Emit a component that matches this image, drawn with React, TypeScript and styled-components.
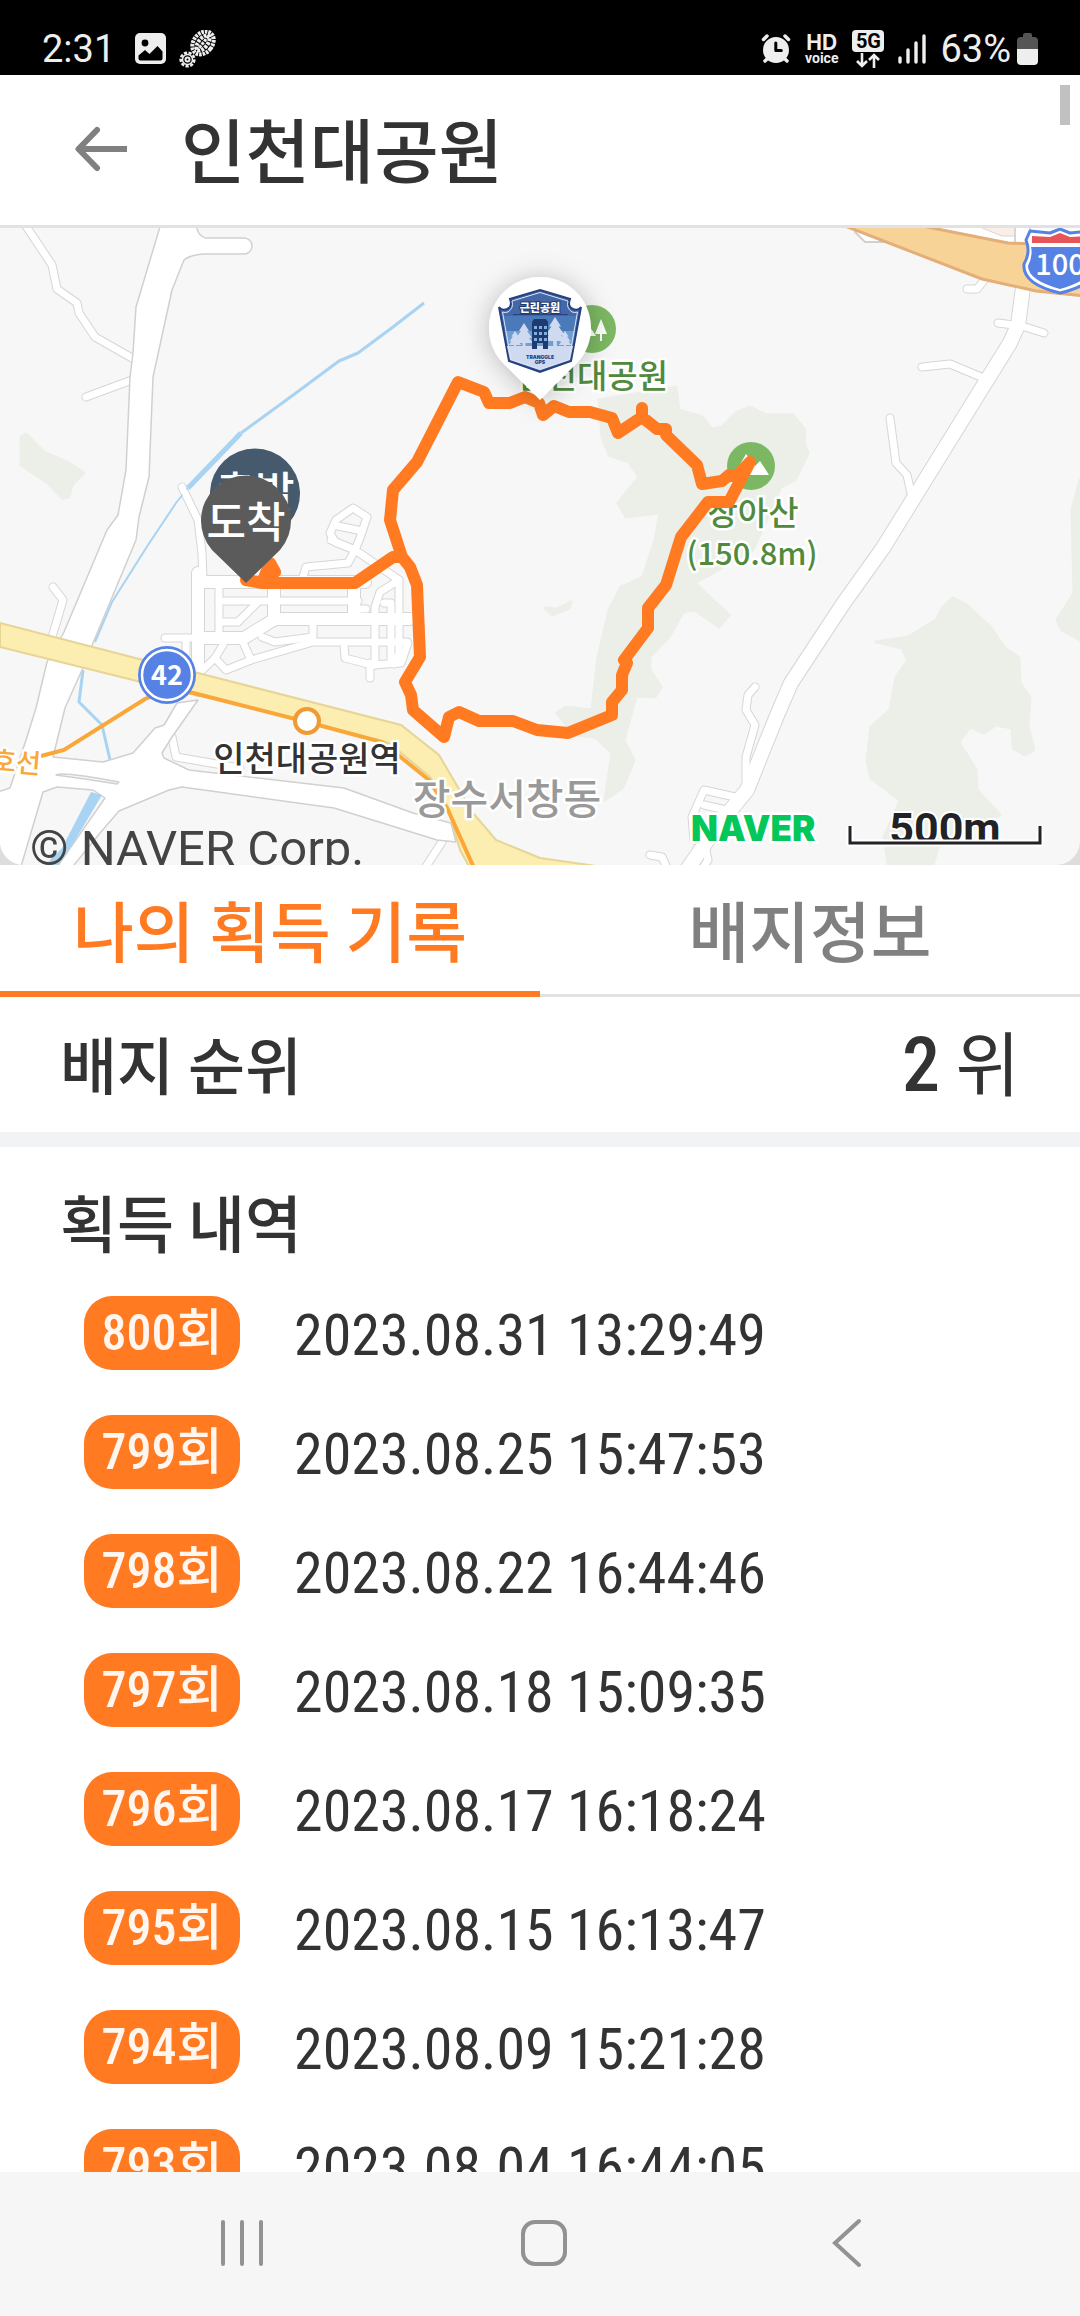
import React, { useState } from "react";
import styled, { createGlobalStyle } from "styled-components";

const ORANGE = "#ff7a21";
const INK = "#333333";

const GlobalStyle = createGlobalStyle`
  *, *::before, *::after { box-sizing: border-box; }
  body {
    margin: 0;
    background: #ffffff;
    color: ${INK};
    font-family: "Noto Sans CJK KR", sans-serif;
  }
  button { font: inherit; color: inherit; background: none; border: 0; padding: 0; margin: 0; }
  h1, h2, p, ul { margin: 0; padding: 0; }
`;

const Screen = styled.div`
  display: flex;
  flex-direction: column;
  height: 100vh;
  overflow: hidden;
`;

/* ---------- status bar ---------- */

const StatusBar = styled.div`
  display: flex;
  flex: none;
  align-items: center;
  justify-content: space-between;
  height: 75px;
  padding: 22px 42px 0 42px;
  background: #000000;
  color: #eeeeee;
  font-family: Roboto, sans-serif;
  font-size: 38px;
  line-height: 48px;
`;

const StatusGroup = styled.div<{ $gap: number }>`
  display: flex;
  align-items: center;
  gap: ${(p) => p.$gap}px;
`;

const StatusPower = styled.div`
  display: flex;
  align-items: center;
  gap: 6px;
`;

const HdVoice = styled.div`
  display: flex;
  flex-direction: column;
  align-items: center;
  font-family: Inter, sans-serif;
  font-weight: 700;
`;

const HdTop = styled.span`
  font-size: 21px;
  line-height: 19px;
`;

const HdBottom = styled.span`
  font-family: Roboto, sans-serif;
  font-size: 14px;
  line-height: 12px;
`;

const NetType = styled.div`
  display: flex;
  flex-direction: column;
  align-items: center;
  gap: 1px;
`;

const NetLabel = styled.span`
  width: 32px;
  border-radius: 4px;
  background: #eeeeee;
  color: #000000;
  font-size: 20px;
  font-weight: 700;
  line-height: 22px;
  text-align: center;
`;

/* ---------- header ---------- */

const Header = styled.header`
  position: relative;
  display: flex;
  flex: none;
  align-items: center;
  gap: 52px;
  height: 153px;
  padding: 0 72px 4px;
  border-bottom: 3px solid #e2e2e2;
`;

const BackButton = styled.button`
  display: flex;
  color: #808080;
`;

const Title = styled.h1`
  font-size: 70px;
  font-weight: 500;
  line-height: 100px;
`;

const ScrollThumb = styled.div`
  position: absolute;
  top: 10px;
  right: 10px;
  width: 10px;
  height: 40px;
  background: #c1c1c1;
`;

/* ---------- map ---------- */

const MapFrame = styled.section`
  flex: none;
  height: 637px;
  background: #dddddd;
`;

const MapDrawing = styled.svg`
  display: block;
  width: 100%;
  height: 100%;
  border-radius: 0 0 24px 24px;
  background: #f7f7f7;
`;

const MapLabel = styled.text<{ $size: number; $weight?: number }>`
  font-family: "Noto Sans CJK KR", sans-serif;
  font-size: ${(p) => p.$size}px;
  font-weight: ${(p) => p.$weight ?? 500};
`;

const HaloLabel = styled(MapLabel)`
  paint-order: stroke;
  stroke: #ffffff;
  stroke-width: 5px;
  stroke-linejoin: round;
`;

const LatinLabel = styled.text<{ $size: number; $weight: number; $family: string }>`
  font-family: ${(p) => p.$family}, sans-serif;
  font-size: ${(p) => p.$size}px;
  font-weight: ${(p) => p.$weight};
`;

/* ---------- tabs ---------- */

const Tabs = styled.div`
  display: flex;
  flex: none;
  height: 132px;
`;

const Tab = styled.button<{ $active: boolean }>`
  flex: 1;
  padding-bottom: ${(p) => (p.$active ? 0 : 3)}px;
  border-bottom: ${(p) => (p.$active ? `6px solid ${ORANGE}` : "3px solid #e2e2e2")};
  color: ${(p) => (p.$active ? ORANGE : "#808080")};
  font-size: 66px;
  font-weight: 500;
  line-height: 96px;
`;

/* ---------- rank + history ---------- */

const RankRow = styled.section`
  display: flex;
  flex: none;
  align-items: center;
  justify-content: space-between;
  height: 150px;
  padding: 0 60px 4px;
  border-bottom: 15px solid #f1f3f5;
`;

const SectionTitle = styled.h2`
  font-size: 62px;
  font-weight: 500;
  line-height: 88px;
`;

const Rank = styled.p`
  font-size: 70px;
  font-weight: 400;
  line-height: 88px;
`;

const RankNumber = styled.strong`
  font-family: "Roboto Condensed", "Noto Sans CJK KR", sans-serif;
  font-size: 76px;
  font-weight: 500;
`;

const History = styled.section`
  flex: 1;
  min-height: 0;
  overflow: hidden;
  padding: 30px 60px 0;
`;

const HistoryList = styled.ul`
  display: flex;
  flex-direction: column;
  gap: 45px;
  margin-top: 31px;
  padding-left: 24px;
  list-style: none;
`;

const HistoryItem = styled.li`
  display: flex;
  align-items: center;
  gap: 54px;
  height: 74px;
`;

const CountBadge = styled.span`
  width: 156px;
  height: 74px;
  border-radius: 28px;
  background: ${ORANGE};
  color: #fff6f0;
  font-family: "Roboto Condensed", "Noto Sans CJK KR", sans-serif;
  font-size: 50px;
  font-weight: 500;
  line-height: 74px;
  text-align: center;
`;

const Stamp = styled.time`
  font-family: "Roboto Condensed", "Noto Sans CJK KR", sans-serif;
  font-size: 58px;
  line-height: 74px;
  padding-top: 4px;
  white-space: nowrap;
`;

/* ---------- bottom navigation ---------- */

const NavBar = styled.nav`
  display: flex;
  flex: none;
  height: 144px;
  padding: 0 82px 2px 92px;
  background: #f6f6f6;
`;

const NavButton = styled.button`
  display: flex;
  flex: 1;
  align-items: center;
  justify-content: center;
`;

const NavIcon = styled.svg`
  width: 52px;
  height: 52px;
  fill: none;
  stroke: #929292;
  stroke-width: 4;
  stroke-linecap: round;
`;

/* ---------- icons ---------- */

const PhotoIcon = () => (
  <svg width="31" height="31" viewBox="0 0 31 31">
    <rect width="31" height="31" rx="5" fill="#eeeeee" />
    <circle cx="10" cy="10" r="3.4" fill="#000" />
    <path d="M3.500 22.500 10 17l4.500 4 8-8 5 5.500v7q0 2-2 2h-20q-2 0-2-2z" fill="#000" />
  </svg>
);

const SoleIcon = () => (
  <svg width="38" height="38" viewBox="0 0 38 38" fill="none" stroke="#eeeeee">
    <g transform="rotate(38 24 13)">
      <ellipse cx="24" cy="13" rx="9.500" ry="12.500" strokeWidth="4" strokeDasharray="2.600 0.900" />
      <ellipse cx="24" cy="13" rx="4.500" ry="9" strokeWidth="4" strokeDasharray="2.800 1.100" />
      <path d="M24 4v18" strokeWidth="3" strokeDasharray="3 1" />
    </g>
    <circle cx="8.500" cy="29.500" r="6.800" strokeWidth="2.600" strokeDasharray="3.200 1.500" />
    <circle cx="8.500" cy="29.500" r="5" strokeWidth="1.500" />
    <circle cx="8.500" cy="29.500" r="2" strokeWidth="2" />
  </svg>
);

const AlarmIcon = () => (
  <svg width="30" height="30" viewBox="0 0 30 30">
    <g stroke="#eeeeee" strokeWidth="3.500" strokeLinecap="round">
      <path d="M2.500 5.500 6 2M27.500 5.500 24 2M4 27l4-4M26 27l-4-4" />
    </g>
    <circle cx="15" cy="16" r="13" fill="#eeeeee" />
    <path d="M14.800 9v7.500h5.500" fill="none" stroke="#000" strokeWidth="3" strokeLinecap="round" strokeLinejoin="round" />
  </svg>
);

const DataArrows = () => (
  <svg width="26" height="15" viewBox="0 0 26 15" fill="none" stroke="#eeeeee" strokeWidth="2.600">
    <path d="M7 0v13M2 8l5 5 5-5M19 15V2M14 7l5-5 5 5" />
  </svg>
);

const SignalIcon = () => (
  <svg width="28" height="30" viewBox="0 0 28 30" stroke="#eeeeee" strokeWidth="3.400" strokeLinecap="round">
    <path d="M2 24v4M10 16v12M18 9v19M26 2v26" />
  </svg>
);

const BatteryIcon = () => (
  <svg width="21" height="32" viewBox="0 0 21 32">
    <path d="M0 16V8q0-4 4-4h2V2q0-2 2-2h5q2 0 2 2v2h2q4 0 4 4v8z" fill="#555555" />
    <path d="M0 16h21v12q0 4-4 4H4q-4 0-4-4z" fill="#eeeeee" />
  </svg>
);

const ArrowLeftIcon = () => (
  <svg width="57" height="48" viewBox="0 0 57 48" fill="none" stroke="currentColor" strokeWidth="6">
    <path d="M55 25H7" />
    <path d="M25 6 6.500 25 25 44" strokeLinecap="round" strokeLinejoin="round" />
  </svg>
);

/* ---------- map drawing ---------- */

const PARKS = [
  "599,400 676,387 679,410 702,417 712,429 722,427 736,413 750,407 766,415 793,415 805,430 804,443 808,453 795,480 781,487 753,550 695,583 729,615 719,627 695,610 683,612 669,637 650,657 650,670 661,687 655,697 636,696 624,740 634,760 623,787 605,800 612,753 595,737 574,735 557,713 566,707 592,710 598,657 609,610 621,587 643,577 655,540 660,513 626,517 618,503 639,477 629,462 609,455 602,437",
  "953,598 967,605 991,628 1005,648 1019,658 1020,683 1030,697 1028,727 1034,750 1025,755 1013,748 1012,728 996,725 984,733 970,727 959,742 976,770 977,790 1000,815 938,847 933,865 888,865 884,837 900,800 871,778 867,760 871,727 890,710 896,677 908,660 902,648 876,642 908,637 936,620 943,607",
  "1080,480 1072,510 1074,593 1057,620 1062,630 1080,640",
  "21,437 26,434 45,453 69,463 84,473 72,485 69,497 62,498 48,483 21,465",
  "545,608 557,609 571,602 569,608 552,615",
];

const LANES = [
  "M22 220 52 265 57 289 77 303 79 313 95 337 132 358",
  "M86 397 132 380",
  "M53 587 63 600 52 637",
  "M182 487 198 520 202 553 203 580",
  "M219 587V640",
  "M219 601H358",
  "M257 603 238 622H219",
  "M165 638H244",
  "M262 637 275 642 313 637V621",
  "M407 642H313L251 660 226 670 215 658 197 675",
  "M215 658 223 645M242 640 251 660",
  "M186 638 186 655 182 668",
  "M344 643 345 658 372 665 401 663 408 643",
  "M370 663V678",
  "M375 665V607L380 592 399 580V653L394 664",
  "M384 603 391 603V663",
  "M331 540 355 550 399 580",
  "M355 550 348 563 306 567 303 577",
  "M353 508 336 520 330 533 335 542 355 550 360 538 367 517Z",
  "M338 526 362 531",
  "M354 609H366",
  "M172 737 176 757 240 768",
  "M967 289H977L986 278",
  "M998 323 1022 326 1044 333",
  "M922 367 950 364 981 377",
  "M890 418 896 463 907 475 911 493",
  "M755 687 748 695 746 710 755 725 746 757 746 780",
  "M735 797 704 790 692 817 694 840",
  "M704 805 722 809 720 822",
  "M650 855 662 857 668 870",
  "M442 842 425 868M704 840 708 860 700 872",
];

const STREETS = [
  "M198 573 198 690",
  "M200 582H365",
  "M274 585V620",
  "M354 585V618",
  "M410 619H275L244 638H200",
];

const HILL_ROAD = "M1024 280 1018 325 1010 343 982 388 883 548 843 604 791 683 778 713 747 790 716 828 684 874";

const ROUTE =
  "M246 580 262 583 270 563 275 572 262 583 355 583 393 557 402 557 410 567 417 585 420 657 405 682 411 695 413 710 444 737 449 717 459 712 479 721 513 721 537 730 568 733 612 715V702L622 690V675L627 663 624 660 648 628V608L666 585 681 537 708 502H729L750 462 736 477 729 475 722 481 702 484 697 465 666 435V429H657L642 417V408 417L618 433 612 418 590 412H569L554 406 543 415 539 403 525 397 510 403H489L484 392 458 382 417 462 393 490 390 520 402 557";

const PinBody = ({ x, y, fill }: { x: number; y: number; fill: string }) => (
  <path d={`M${x} ${y + 63}l-34-33a45 45 0 1 1 68 0z`} fill={fill} />
);

const Tree = ({ x, y, s }: { x: number; y: number; s: number }) => (
  <path
    transform={`translate(${x} ${y}) scale(${s})`}
    d="M0-20 5-12H3L8-5H5L9 0H1.500V5h-3V0H-9l4-5h-3l5-7h-2z"
  />
);

const ParkBadge = () => (
  <g>
    <path
      d="M540 290 570 299Q567 306 573 309 578 311 581 307L571 361 540 372 509 361 499 307Q502 311 507 309 513 306 510 299z"
      fill="#4467a8"
      stroke="#27427e"
      strokeWidth="2"
    />
    <path d="M503 316H577L575 331H505z" fill="#4a7ab9" />
    <path d="M505 331H575L572 348H508z" fill="#6f9fd2" />
    <path d="M507 346H573L570 360 540 370 510 360z" fill="#cfdaf0" />
    <g fill="#cfdaf0">
      <Tree x={524} y={343} s={1} />
      <Tree x={515} y={345} s={0.7} />
      <Tree x={555} y={341} s={1.2} />
      <Tree x={565} y={345} s={0.7} />
    </g>
    <path d="M532 322l2-3h12l2 3v27h-5v-6h-6v6h-5z" fill="#1f3a70" />
    <path d="M534 326h3v3h-3zm5 0h3v3h-3zm5 0h3v3h-3zM534 332h3v3h-3zm5 0h3v3h-3zm5 0h3v3h-3zM534 338h3v3h-3zm5 0h3v3h-3zm5 0h3v3h-3z" fill="#7fb0e0" />
    <path d="M512 301 540 292.500 568 301Q566 308 572 312 575 313 577.500 312L569 359.500 540 369.500 511 359.500 502.500 312Q505 313 508 312 514 308 512 301" fill="none" stroke="#dbe5f6" />
    <path d="M513 314.500H568" stroke="#27427e" />
    <MapLabel
      x="540"
      y="312"
      $size={11}
      $weight={900}
      textAnchor="middle"
      fill="#ffffff"
      stroke="#1f3a70"
      strokeWidth="2"
      paintOrder="stroke"
    >
      근린공원
    </MapLabel>
    <LatinLabel x="540" y="359" $size={5} $weight={900} $family="Inter" textAnchor="middle" fill="#27427e">
      TRANGGLE
    </LatinLabel>
    <LatinLabel x="540" y="364" $size={5} $weight={900} $family="Inter" textAnchor="middle" fill="#27427e">
      GPS
    </LatinLabel>
  </g>
);

const TrailMap = () => (
  <MapDrawing viewBox="0 228 1080 637" preserveAspectRatio="xMidYMid slice" role="img" aria-label="인천대공원 지도">
    <defs>
      <filter id="pinShadow" x="-60%" y="-60%" width="220%" height="220%">
        <feDropShadow dx="0" dy="2" stdDeviation="13" floodColor="#000000" floodOpacity="0.25" />
      </filter>
    </defs>

    <g fill="#ecefe8" stroke="#ecefe8" strokeWidth="3" strokeLinejoin="round">
      {PARKS.map((points) => (
        <polygon key={points} points={points} />
      ))}
    </g>

    {/* minor roads: casing first, surface over it */}
    <g fill="none" strokeLinecap="round" strokeLinejoin="round">
      <g stroke="#d6d6d6">
        <g strokeWidth="9">{LANES.map((d) => <path key={d} d={d} />)}</g>
        <g strokeWidth="14">{STREETS.map((d) => <path key={d} d={d} />)}</g>
        <path d={HILL_ROAD} strokeWidth="16" />
      </g>
      <g stroke="#ffffff">
        <g strokeWidth="7">{LANES.map((d) => <path key={d} d={d} />)}</g>
        <g strokeWidth="12">{STREETS.map((d) => <path key={d} d={d} />)}</g>
        <path d={HILL_ROAD} strokeWidth="14" />
      </g>
    </g>

    {/* stream */}
    <g fill="none" stroke="#a8d3f2" strokeLinejoin="round">
      <path d="M424 303 393 327 358 353 339 361 300 390 241 433" strokeWidth="3" />
      <path d="M241 433 188 488" strokeWidth="5" />
      <path d="M188 488 176 503 148 545 112 602 95 642" strokeWidth="2" />
      <path d="M83 670 79 702 102 725 110 760" strokeWidth="3" />
    </g>
    <path d="M182 487 198 520" stroke="#fff" strokeWidth="6" strokeLinecap="round" />

    {/* arterial roads */}
    <g fill="#ffffff" stroke="#d2d0cf" strokeWidth="1.500" strokeLinejoin="round">
      <path d="M162 220 136 307 133 353 130 377 126 470 118 515 107 530 64 632 47 662 36 708 26 740 10 788-5 793V880H17L43 792 57 787 93 790 105 798 55 870H70L100 833 119 811 169 790 182 787 334 808 437 840 456 842 451 823 413 813 344 788 189 770 164 758 162 753 172 737 198 700 177 703 164 725 155 728 133 753 103 762 53 757 65 708 82 670 93 643 136 540 139 517 149 477 153 377 172 290 184 260Q190 255 203 254H244A8 8 0 0 0 244 238H206Q196 236 196 220z" />
      <path d="M56 775Q62 771 119 782L117 784 85 779z" fill="#f7f7f7" />
    </g>
    <path d="M91 792 102 795 74 842 55 870H40L62 848z" fill="#a8d3f2" />

    <path d="M0 623 143 660 198 673 401 725 439 755 473 813 496 840 540 858 610 868H470L460 850 448 807 430 777 389 743 193 692 145 683 0 647z" fill="#fcedb1" stroke="#e6d596" strokeWidth="2" />
    <path d="M41 756 64 750 145 699 168 690 193 693 307 722 382 742 429 780 448 810 474 868" fill="none" stroke="#f9a737" strokeWidth="4" />
    <circle cx="307" cy="721" r="12" fill="#ffffff" stroke="#f09a35" strokeWidth="4" />

    {/* expressway */}
    <path d="M855 228V232L865 242H885z" fill="#fff" stroke="#d2d0cf" strokeWidth="2" />
    <path d="M925 225 1008 243 1080 246V225z" fill="#fff" />
    <path d="M975 225 1002 236H1015V225z" fill="#fbeee6" stroke="#d6d6d6" />
    <path d="M1015 225V243M1030 225V243" stroke="#d6d6d6" strokeWidth="2" />
    <path d="M845 226 982 279 1036 291 1085 296V246L1008 243 922 226z" fill="#f8d398" stroke="#e3ae77" strokeWidth="3" />

    {/* route shields */}
    <g strokeLinejoin="round">
      <path d="M1060 229 1070 233 1090 231 1096 240Q1089 252 1096 264 1098 284 1060 293 1022 284 1024 264 1031 252 1026 240L1030 231 1050 233z" fill="#ffffff" stroke="#5682e6" strokeWidth="3" />
      <path d="M1032 243V236L1050 237 1060 233 1070 237 1090 236V243z" fill="#e85558" />
      <path d="M1031 247H1091Q1087 256 1092 266 1092 280 1060 289 1028 280 1028 266 1033 256 1031 247z" fill="#5682e6" />
      <MapLabel x="1060" y="275" $size={29} $weight={500} textAnchor="middle" fill="#ffffff">
        100
      </MapLabel>
    </g>
    <circle cx="167" cy="675" r="29" fill="#5682e6" />
    <circle cx="167" cy="675" r="25" fill="none" stroke="#ffffff" strokeWidth="2.500" />
    <MapLabel x="167" y="685" $size={27} $weight={700} textAnchor="middle" fill="#ffffff">
      42
    </MapLabel>

    {/* places */}
    <circle cx="592" cy="329" r="24" fill="#7cb863" />
    <path d="M601 319 607 334H602V341H600V334H595zM588 324 596 336H580z" fill="#ffffff" />
    <circle cx="751" cy="466" r="24" fill="#7cb863" />
    <path d="M734 475 746 454 755 466 760 461 769 475z" fill="#ffffff" />
    <g fill="#518a3c">
      <HaloLabel x="668" y="388" $size={33} textAnchor="end">
        인천대공원
      </HaloLabel>
      <HaloLabel x="753" y="525" $size={33} textAnchor="middle">
        장아산
      </HaloLabel>
      <HaloLabel x="752" y="565" $size={31} textAnchor="middle">
        (150.8m)
      </HaloLabel>
    </g>
    <HaloLabel x="307" y="771" $size={34} textAnchor="middle" fill="#333333">
      인천대공원역
    </HaloLabel>
    <HaloLabel x="507" y="814" $size={41} textAnchor="middle" fill="#999999">
      장수서창동
    </HaloLabel>
    <HaloLabel x="40" y="774" $size={27} textAnchor="end" fill="#f9a737" transform="rotate(5 40 774)">
      호선
    </HaloLabel>

    <path d={ROUTE} fill="none" stroke={ORANGE} strokeWidth="12" strokeLinecap="round" strokeLinejoin="round" />

    {/* start and finish pins */}
    <PinBody x={255} y={493} fill="#455a6c" />
    <MapLabel x="255" y="508" $size={43} textAnchor="middle" fill="#ffffff">
      출발
    </MapLabel>
    <PinBody x={246} y={520} fill="#5b5b5b" />
    <MapLabel x="246" y="538" $size={43} textAnchor="middle" fill="#ffffff">
      도착
    </MapLabel>

    <path d="M540 400 503 363A51 51 0 1 1 577 363z" fill="#ffffff" filter="url(#pinShadow)" />
    <ParkBadge />

    {/* attribution and scale */}
    <LatinLabel x="691" y="841" $size={35} $weight={900} $family="Inter" fill="#03c75a" stroke="#ffffff" strokeWidth="5" paintOrder="stroke">
      NAVER
    </LatinLabel>
    <LatinLabel x="945" y="843" $size={43} $weight={700} $family="Roboto" textAnchor="middle" fill="#222226" stroke="#ffffff" strokeWidth="4" paintOrder="stroke">
      500m
    </LatinLabel>
    <path d="M850 826V843H1040V826" fill="none" stroke="#ffffff" strokeWidth="7" />
    <path d="M850 826V843H1040V826" fill="none" stroke="#222226" strokeWidth="3" />
    <LatinLabel x="30" y="865" $size={49} $weight={400} $family="Roboto" fill="#444444">
      © NAVER Corp.
    </LatinLabel>
  </MapDrawing>
);

/* ---------- data ---------- */

const RECORDS = [
  { count: 800, at: "2023.08.31 13:29:49" },
  { count: 799, at: "2023.08.25 15:47:53" },
  { count: 798, at: "2023.08.22 16:44:46" },
  { count: 797, at: "2023.08.18 15:09:35" },
  { count: 796, at: "2023.08.17 16:18:24" },
  { count: 795, at: "2023.08.15 16:13:47" },
  { count: 794, at: "2023.08.09 15:21:28" },
  { count: 793, at: "2023.08.04 16:44:05" },
];

const TAB_NAMES = ["나의 획득 기록", "배지정보"];

export default function App() {
  const [tab, setTab] = useState(0);

  return (
    <Screen>
      <GlobalStyle />
      <StatusBar>
        <StatusGroup $gap={13}>
          <StatusGroup $gap={20}>
            <span>2:31</span>
            <PhotoIcon />
          </StatusGroup>
          <SoleIcon />
        </StatusGroup>
        <StatusGroup $gap={14}>
          <AlarmIcon />
          <HdVoice>
            <HdTop>HD</HdTop>
            <HdBottom>voice</HdBottom>
          </HdVoice>
          <NetType>
            <NetLabel>5G</NetLabel>
            <DataArrows />
          </NetType>
          <SignalIcon />
          <StatusPower>
            <span>63%</span>
            <BatteryIcon />
          </StatusPower>
        </StatusGroup>
      </StatusBar>

      <Header>
        <BackButton type="button" aria-label="뒤로">
          <ArrowLeftIcon />
        </BackButton>
        <Title>인천대공원</Title>
        <ScrollThumb />
      </Header>

      <MapFrame>
        <TrailMap />
      </MapFrame>

      <Tabs role="tablist">
        {TAB_NAMES.map((name, i) => (
          <Tab key={name} type="button" role="tab" aria-selected={tab === i} $active={tab === i} onClick={() => setTab(i)}>
            {name}
          </Tab>
        ))}
      </Tabs>

      <RankRow>
        <SectionTitle>배지 순위</SectionTitle>
        <Rank>
          <RankNumber>2</RankNumber> 위
        </Rank>
      </RankRow>

      <History>
        <SectionTitle>획득 내역</SectionTitle>
        <HistoryList>
          {RECORDS.map((r) => (
            <HistoryItem key={r.count}>
              <CountBadge>{r.count}회</CountBadge>
              <Stamp>{r.at}</Stamp>
            </HistoryItem>
          ))}
        </HistoryList>
      </History>

      <NavBar>
        <NavButton type="button" aria-label="최근 앱">
          <NavIcon viewBox="0 0 52 52">
            <path d="M6 5V47M25 5V47M44 5V47" />
          </NavIcon>
        </NavButton>
        <NavButton type="button" aria-label="홈">
          <NavIcon viewBox="0 0 52 52">
            <rect x="4" y="5" width="42" height="42" rx="12" />
          </NavIcon>
        </NavButton>
        <NavButton type="button" aria-label="이전">
          <NavIcon viewBox="0 0 52 52">
            <path d="M38 4 14 26 38 48" />
          </NavIcon>
        </NavButton>
      </NavBar>
    </Screen>
  );
}
